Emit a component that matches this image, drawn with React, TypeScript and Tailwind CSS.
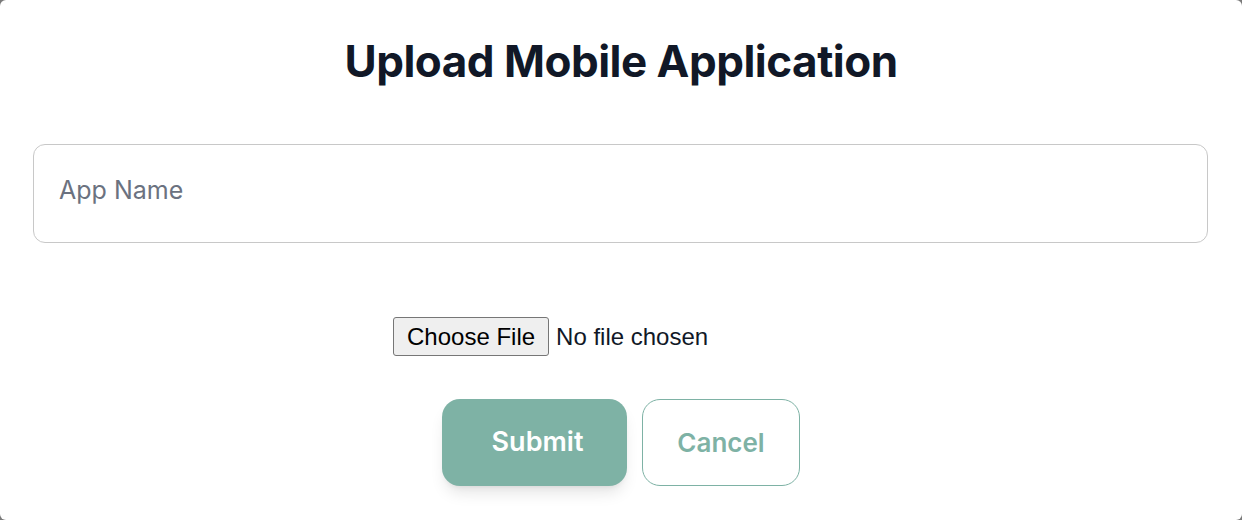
import { useState } from 'react'

export default function App() {
  const [appName, setAppName] = useState('')

  return (
    <div className="w-[1242px] h-[520px] bg-[#7a7a7a]">
      <div className="w-full h-full bg-white rounded-md flex flex-col items-center px-[33px] pt-[33px]">
        <h1 className="text-[44px] leading-[56px] font-bold text-[#111827] tracking-[-0.5px] font-['Inter',sans-serif]">
          Upload Mobile Application
        </h1>

        <input
          type="text"
          placeholder="App Name"
          value={appName}
          onChange={(e) => setAppName(e.target.value)}
          className="mt-[55px] self-start w-[1175px] h-[99px] rounded-xl border border-[#c8c8c8] px-[25px] pb-2 text-[25px] text-[#111827] placeholder:text-[#6b7280] outline-none font-['Inter',sans-serif]"
        />

        <input
          type="file"
          className="mt-[74px] ml-[-2px] text-[24px] leading-[29px] text-[#111827] font-['Liberation_Sans',Arial,sans-serif] file:mr-[7px] file:px-[13px] file:py-[4px] file:bg-[#efefef] file:border file:border-[#767676] file:rounded-[3px] file:text-black file:font-['Liberation_Sans',Arial,sans-serif]"
        />

        <div className="mt-[43px] flex gap-[15px] font-['Inter',sans-serif]">
          <button
            type="submit"
            className="w-[185px] h-[87px] pl-[6px] rounded-[18px] bg-[#7eb2a5] text-white text-[27px] font-semibold shadow-lg"
          >
            Submit
          </button>
          <button
            type="button"
            className="w-[158px] h-[87px] rounded-[18px] border border-[#7eb2a5] bg-white text-[#7eb2a5] text-[26px] font-semibold"
          >
            Cancel
          </button>
        </div>
      </div>
    </div>
  )
}
